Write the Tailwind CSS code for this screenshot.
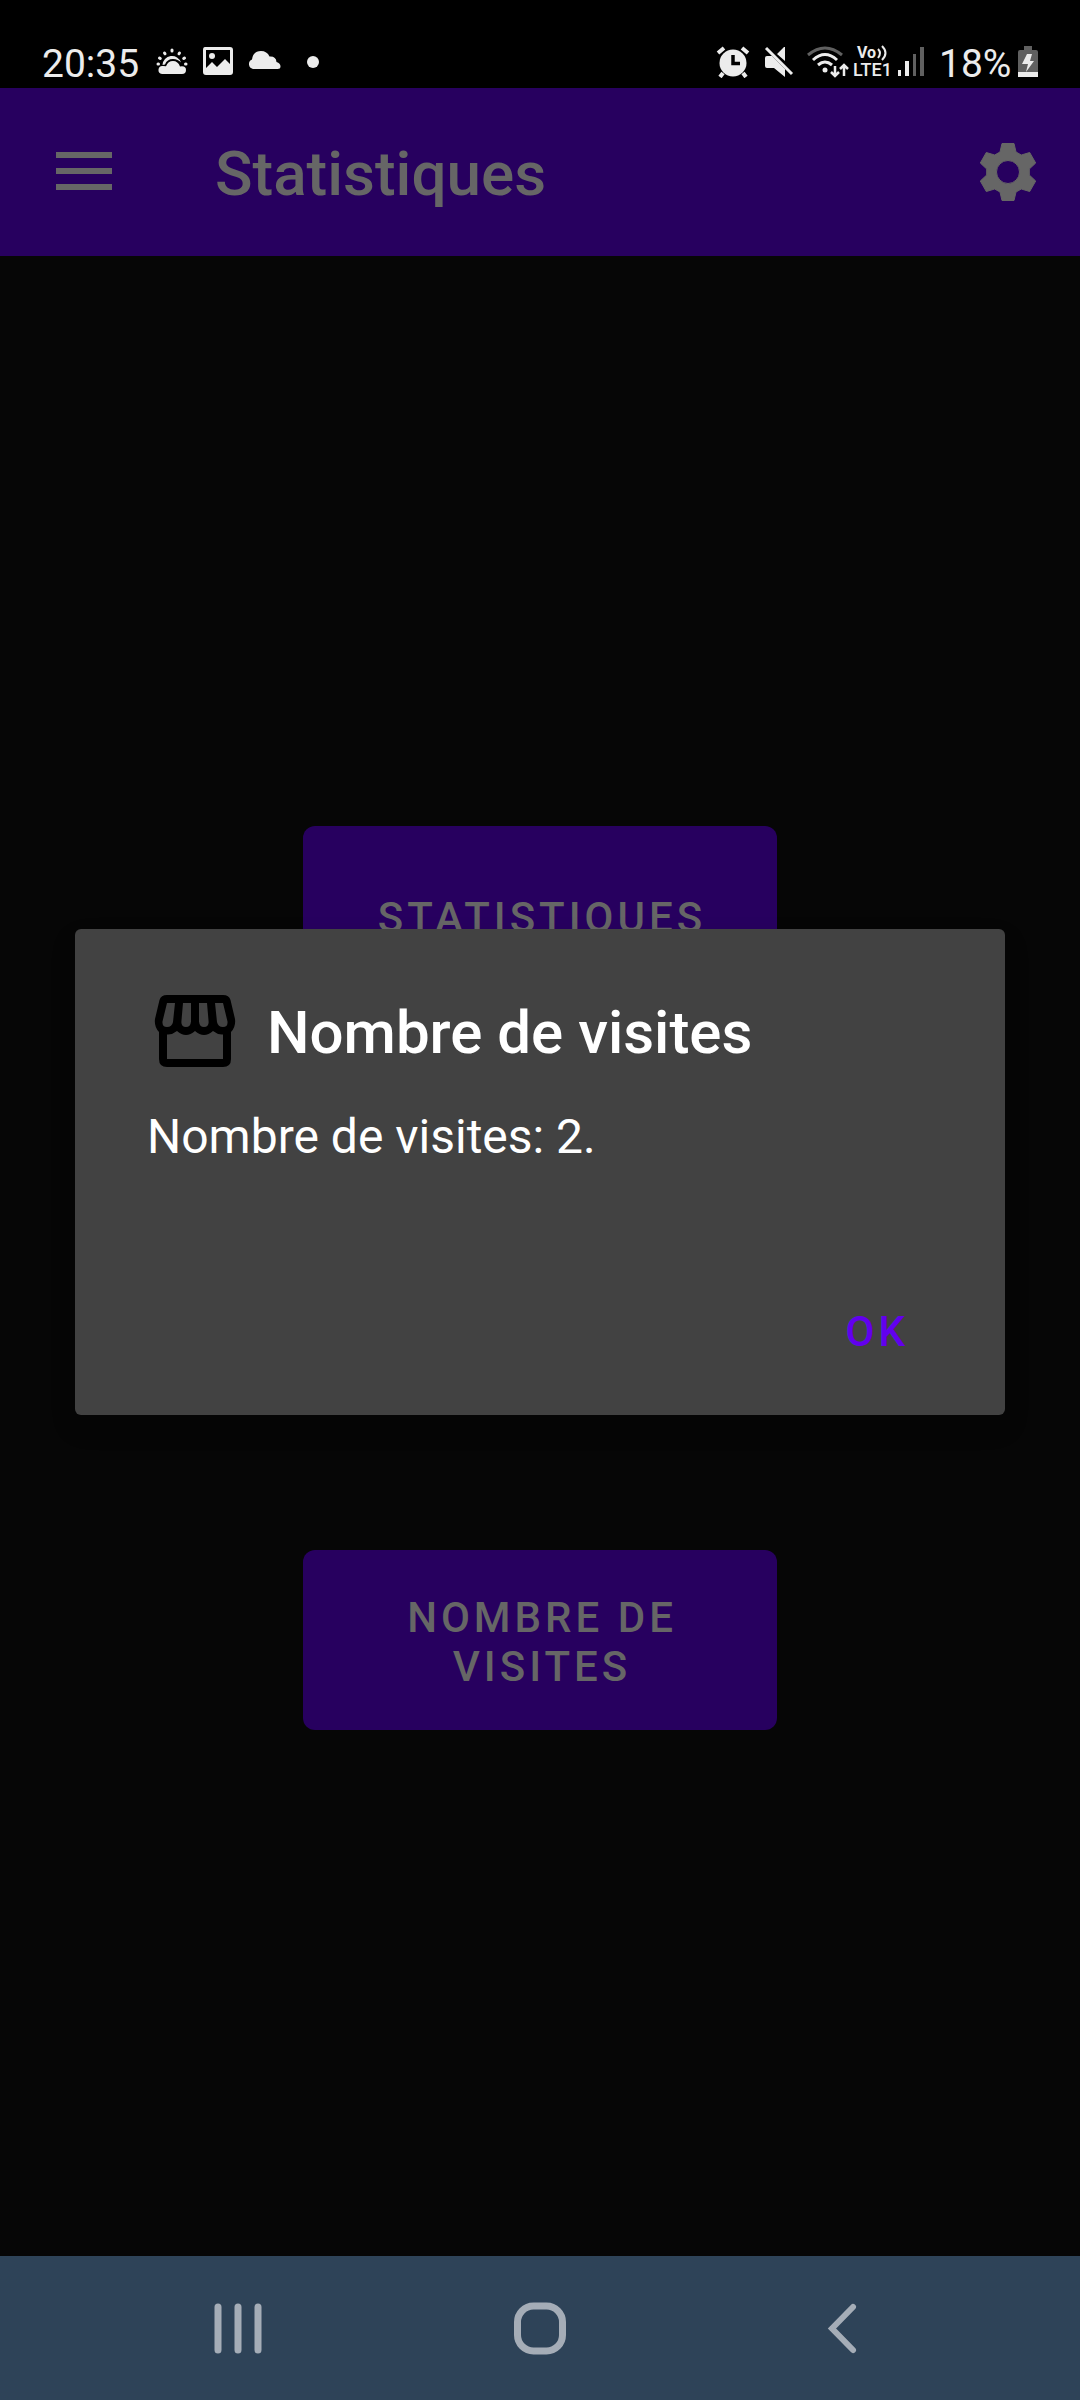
<!DOCTYPE html>
<html lang="fr">
<head>
<meta charset="utf-8">
<meta name="viewport" content="width=device-width, initial-scale=1">
<title>Statistiques</title>
<script src="https://cdn.jsdelivr.net/npm/@tailwindcss/browser@4"></script>
</head>
<body class="flex min-h-screen flex-col bg-[#060606] font-[Roboto,sans-serif] text-[#666666]">

  <!-- System status bar -->
  <div class="flex h-22 items-center justify-between bg-black pl-[42px] pr-[42px] pt-9 text-[39px] leading-[48px] text-[#ececec]">
    <div class="flex items-center">
      <span class="w-[114px] pt-1">20:35</span>
      <svg class="mr-[14px] h-8 w-8" viewBox="0 0 32 32" fill="none" aria-hidden="true">
        <g stroke="#ececec" stroke-width="3" stroke-linecap="round">
          <path d="M16 4v1M8.500 7l.5.8M23.500 7l-.5.8M3.500 12l.8.500M28.500 12l-.8.500M2 18h.5M29.500 18h.5"/>
        </g>
        <path d="M6.500 19a9.500 9.500 0 0 1 18.500-2.500Q22 13 17 13q-6 0-8 5.500Z" fill="#ececec"/>
        <path d="M6 28a4 4 0 0 1 1-8q2 0 3 .3Q12 15 17 15t7 5.500q6-1 6 3.500 0 4-4 4Z" fill="#ececec"/>
      </svg>
      <svg class="mr-[13px] h-8 w-8" viewBox="0 0 32 32" aria-hidden="true">
        <path fill="#ececec" fill-rule="evenodd" d="M3 1H28Q31 1 31 4V26Q31 29 28 29H4Q1 29 1 26V4Q1 1 3 1ZM4 4V22L10 16 15 21 23 13 28 18V4Z"/>
        <circle cx="10" cy="10" r="3" fill="#ececec"/>
      </svg>
      <svg class="mr-6 h-8 w-9" viewBox="0 1 36 32" aria-hidden="true">
        <path fill="#ececec" d="M6 24a5 5 0 0 1-1-9.500Q6 6 14 6q6 0 8.500 5.500Q29 11 29.500 17q4 1 4 4.500 0 2.500-3 2.500Z"/>
      </svg>
      <span class="size-3 rounded-full bg-[#ececec]"></span>
    </div>
    <div class="flex items-center">
      <svg class="mr-3 h-8 w-9" viewBox="0 0 36 32" fill="none" aria-hidden="true">
        <circle cx="18" cy="17" r="13.500" fill="#ececec"/>
        <path d="M3 7 9 2M33 7 27 2M8 27 5 31M28 27l3 4" stroke="#ececec" stroke-width="4"/>
        <path d="M18 9V17.500H25" stroke="#000" stroke-width="3.500"/>
      </svg>
      <svg class="mr-3 h-8 w-8" viewBox="0 0 32 32" aria-hidden="true">
        <path fill="#ececec" d="M2 12Q2 10 4 10H9L22 23V31L11 22H4Q2 22 2 20ZM14 8 21 1H22V15Z"/>
        <path d="M3 2 29 28" stroke="#ececec" stroke-width="3"/>
      </svg>
      <svg class="mr-1 h-8 w-[42px]" viewBox="0 0 42 32" fill="none" aria-hidden="true">
        <path d="M1 9Q18-5 35 9" stroke="#606060" stroke-width="3"/>
        <path d="M6 14Q18 3 30 14M11 19Q18 13 25 19" stroke="#ececec" stroke-width="3"/>
        <circle cx="18" cy="24" r="2.500" fill="#ececec"/>
        <path d="M28 20V30M24 26l4 4 4-4M37 30V19M33 23l4-4 4 4" stroke="#ececec" stroke-width="2.500"/>
      </svg>
      <svg class="mr-1 h-10 w-10" viewBox="0 -4 40 40" aria-hidden="true">
        <text x="4" y="12" font-size="16" font-weight="700" fill="#ececec">Vo</text>
        <path d="M25 3Q29 7 25 12M29 0Q36 7 29 14" fill="none" stroke="#ececec" stroke-width="2"/>
        <text x="0" y="30" font-size="18" font-weight="500" fill="#ececec">LTE1</text>
      </svg>
      <svg class="mr-[14px] h-8 w-7" viewBox="0 2 28 32" aria-hidden="true">
        <path fill="#ececec" d="M1 26h3v6H1zM8 17h4v15H8z"/>
        <path fill="#606060" d="M16 10h3v22h-3zM23 3h4v29h-4z"/>
      </svg>
      <span class="w-[79px] pt-1">18%</span>
      <svg class="h-8 w-5" viewBox="0 0 20 32" aria-hidden="true">
        <path fill="#606060" d="M6 0h8v4h4q2 0 2 2v25H0V6q0-2 2-2h4z"/>
        <path fill="#ececec" d="M0 26h20v5H0zM9 8h5l-2 7h4L8 26l2-8H4z"/>
      </svg>
    </div>
  </div>

  <div class="relative flex grow flex-col">
    <!-- App bar -->
    <header class="flex h-42 items-center bg-[#27005f] pl-14 pr-[43px]">
      <button type="button" aria-label="Menu" class="mr-[103px]">
        <svg class="block h-10 w-14" viewBox="0 0 56 40" fill="#666666"><path d="M0 0h56v6H0zM0 16h56v6H0zM0 32h56v6H0z"/></svg>
      </button>
      <h1 class="grow pt-1 text-[62px] font-medium leading-[70px]">Statistiques</h1>
      <button type="button" aria-label="Paramètres">
        <svg class="block h-15 w-[58px]" viewBox="-29 -30 58 60">
          <path fill="#666666" stroke="#666666" stroke-linejoin="round" fill-rule="evenodd" d="M-6-28.500H6L8-20 13.300-17 21.700-19.500 27.700-9 21.300-3V3L27.700 9 21.700 19.500 13.300 17 8 20 6 28.500H-6L-8 20-13.300 17-21.700 19.500-27.700 9-21.300 3V-3L-27.700-9-21.700-19.500-13.300-17-8-20ZM0-11.500A11.500 11.500 0 1 0 0 11.500 11.500 11.500 0 1 0 0-11.500Z"/>
        </svg>
      </button>
    </header>

    <main class="flex grow flex-col items-center gap-[544px] pt-[570px]">
      <button type="button" class="h-45 w-[474px] rounded-xl bg-[#27005f] pl-13 pr-12 pt-[3px] text-[42px] font-medium uppercase leading-[49px] tracking-[4px]">Statistiques</button>
      <button type="button" class="h-45 w-[474px] rounded-xl bg-[#27005f] pl-13 pr-12 pt-[3px] text-[42px] font-medium uppercase leading-[49px] tracking-[4px]">Nombre de visites</button>
    </main>

    <!-- Dialog laid over the screen content -->
    <div class="absolute inset-0 flex items-center px-[75px]">
      <section role="dialog" aria-modal="true" aria-labelledby="dialog-title" class="grow rounded-md bg-[#424242] px-18 pb-[12px] pt-[54px] text-white shadow-[0_12px_24px_rgb(0_0_0/0.2)]">
        <div class="flex items-center gap-6">
          <svg class="size-24" viewBox="0 0 96 96" aria-hidden="true">
            <path fill="#000" fill-rule="evenodd" d="M20 12H76Q82 12 83.500 17L88 36Q89 44 84 49V76Q84 84 76 84H20Q12 84 12 76V49Q7 44 8 36L12.500 17Q14 12 20 12ZM20 76H76V51.500Q71 52 66 48 57 56 48 48 39 56 30 48 25 52 20 51.500ZM20 20H28L26 39Q25 44 20 44 15 44 15.500 38.500ZM36 20H44V38.500Q43.500 44 39 44 34 44 34.400 38.500ZM52 20H60L61.600 38.500Q62 44 57 44 52.500 44 52 38.500ZM68 20H76L80.500 38.500Q81 44 76 44 71 44 70 39Z"/>
          </svg>
          <h2 id="dialog-title" class="pt-1 text-[60px] font-medium leading-[70px]">Nombre de visites</h2>
        </div>
        <p class="mt-[30px] text-[48px] leading-[56px]">Nombre de visites: 2.</p>
        <div class="mt-[94px] flex justify-end">
          <button type="button" class="h-36 px-6 text-[42px] font-medium leading-[49px] tracking-[4px] text-[#6200ee]">OK</button>
        </div>
      </section>
    </div>
  </div>

  <!-- System navigation bar -->
  <nav aria-label="Navigation système" class="grid h-36 grid-cols-3 items-center justify-items-center bg-[#2e4358] px-[87px]">
    <button type="button" aria-label="Applications récentes">
      <svg class="block size-14" viewBox="0 0 56 56" fill="none" stroke="#a5adb7" stroke-width="7" stroke-linecap="round"><path d="M8 7V50M28 7V50M48 7V50"/></svg>
    </button>
    <button type="button" aria-label="Accueil">
      <svg class="block size-14" viewBox="0 0 56 56" fill="none" stroke="#a5adb7" stroke-width="7"><rect x="5.500" y="6" width="45" height="45" rx="16"/></svg>
    </button>
    <button type="button" aria-label="Retour">
      <svg class="block size-14" viewBox="0 0 56 56" fill="none" stroke="#a5adb7" stroke-width="6" stroke-linecap="round"><path d="M39 7 18 28.500 39 50"/></svg>
    </button>
  </nav>
</body>
</html>
